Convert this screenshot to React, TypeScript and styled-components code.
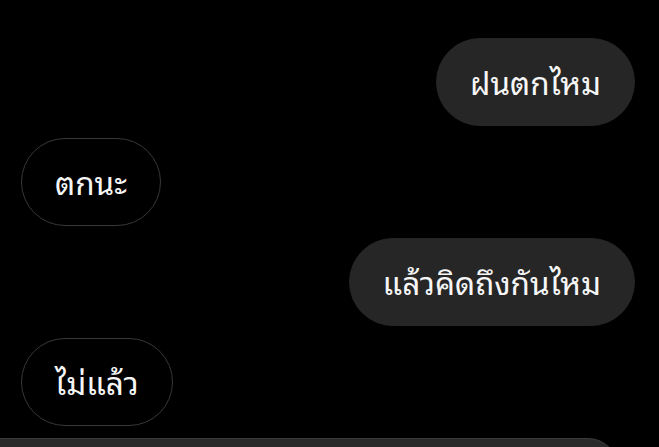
import React from "react";
import styled, { createGlobalStyle } from "styled-components";

const Global = createGlobalStyle`
  html, body { margin: 0; padding: 0; background: #000; }
  body { font-family: "Noto Sans Thai Looped", "Noto Sans", sans-serif; overflow: hidden; }
`;

const Screen = styled.div`
  width: 659px;
  height: 447px;
  background: #000;
  display: flex;
  flex-direction: column;
  gap: 12px;
  padding: 38px 24px 0 21px;
  box-sizing: border-box;
  overflow: hidden;
`;

const Row = styled.div<{ $mine?: boolean }>`
  display: flex;
  justify-content: ${(p) => (p.$mine ? "flex-end" : "flex-start")};
`;

const Bubble = styled.div<{ $mine?: boolean }>`
  height: 88px;
  box-sizing: border-box;
  display: flex;
  align-items: center;
  padding: 0 33px;
  border-radius: 44px;
  color: #f6f6f6;
  font-size: 31.5px;
  font-weight: 400;
  line-height: 1;
  background: ${(p) => (p.$mine ? "#262626" : "#000")};
  border: 1.5px solid ${(p) => (p.$mine ? "#262626" : "#383838")};
`;

const Composer = styled.div`
  margin-left: -21px;
  width: 618px;
  height: 60px;
  flex-shrink: 0;
  background: #2a2a2a;
  border-top-right-radius: 30px;
  border-top: 1px solid #3a3a3a;
`;

const messages = [
  { text: "ฝนตกไหม", mine: true },
  { text: "ตกนะ", mine: false },
  { text: "แล้วคิดถึงกันไหม", mine: true },
  { text: "ไม่แล้ว", mine: false },
];

export default function App() {
  return (
    <>
      <Global />
      <Screen>
        {messages.map((m, i) => (
          <Row key={i} $mine={m.mine}>
            <Bubble $mine={m.mine}>{m.text}</Bubble>
          </Row>
        ))}
        <Composer />
      </Screen>
    </>
  );
}
